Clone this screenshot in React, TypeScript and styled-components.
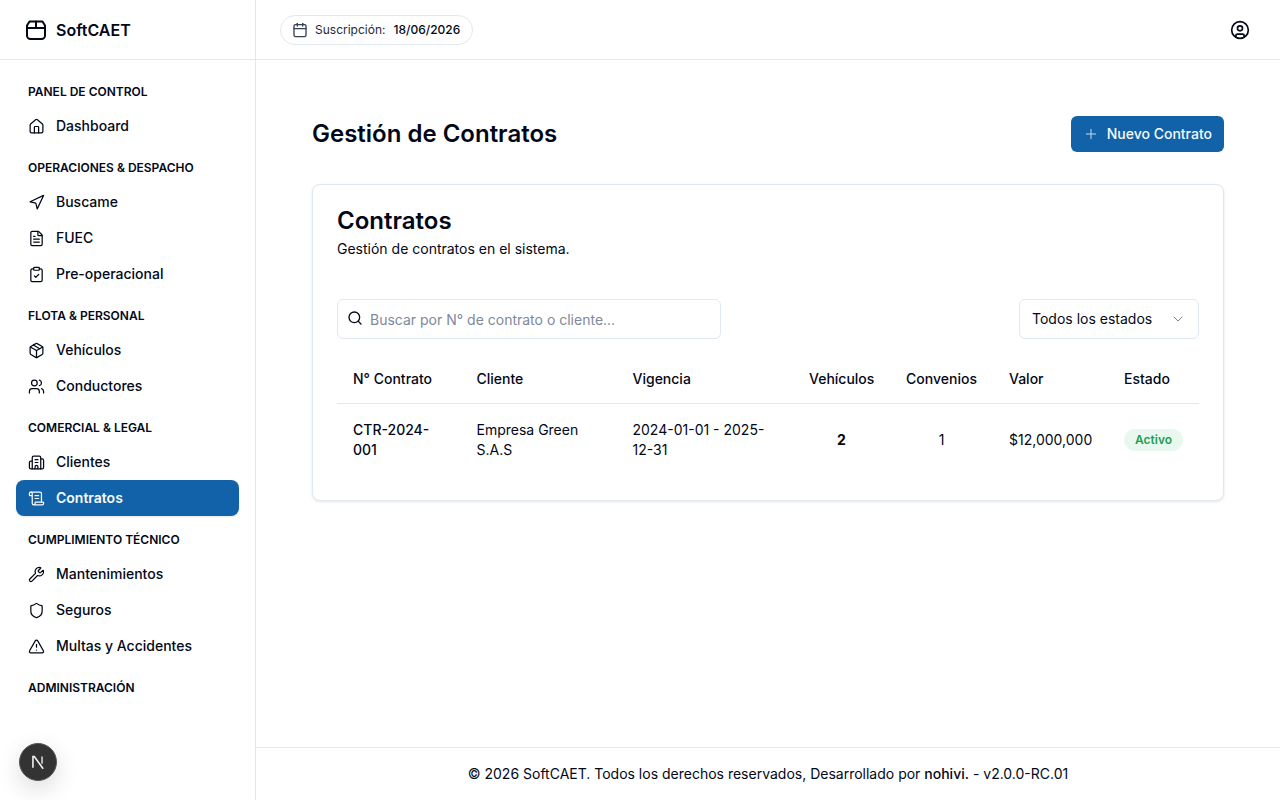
import React from "react";
import styled, { createGlobalStyle } from "styled-components";
import {
  House, Navigation, FileText, ClipboardCheck, Package, Users, Building2, ScrollText,
  Wrench, Shield, TriangleAlert, Calendar, CircleUser, Search, ChevronDown, Plus,
} from "lucide-react";

const Global = createGlobalStyle`
  * { box-sizing: border-box; }
  html, body { margin: 0; height: 100%; background: #fff; }
  body { font-family: Inter, "Liberation Sans", sans-serif; color: #020817; font-size: 14px; line-height: 20px; }
`;

const Shell = styled.div`
  display: flex;
  width: 100%;
  height: 100vh;
  overflow: hidden;
`;

const Sidebar = styled.aside`
  position: relative;
  flex: 0 0 256px;
  display: flex;
  flex-direction: column;
  border-right: 1px solid #e2e8f0;
`;

const Brand = styled.div`
  height: 60px;
  flex: none;
  display: flex;
  align-items: center;
  gap: 8px;
  padding: 0 24px;
  border-bottom: 1px solid #e2e8f0;
  font-size: 16px;
  line-height: 24px;
  font-weight: 600;
`;

const Nav = styled.nav`
  display: flex;
  flex-direction: column;
  padding: 19px 16px 0;
`;

const Group = styled.div`
  display: flex;
  flex-direction: column;
  margin-bottom: 11px;
`;

const GroupTitle = styled.div`
  height: 24px;
  margin-bottom: 5px;
  padding: 0 12px;
  display: flex;
  align-items: center;
  font-size: 12px;
  line-height: normal;
  font-weight: 600;
`;

const Item = styled.a<{ $active?: boolean }>`
  height: 36px;
  display: flex;
  align-items: center;
  gap: 11.5px;
  padding: 0 11.5px;
  border-radius: 8px;
  font-size: 14px;
  font-weight: ${(p) => (p.$active ? 600 : 500)};
  color: ${(p) => (p.$active ? "#f8fafc" : "#020817")};
  background: ${(p) => (p.$active ? "#1162a8" : "transparent")};
  box-shadow: ${(p) => (p.$active ? "0 1px 2px rgba(0,0,0,.1)" : "none")};
  svg { width: 17px; height: 17px; flex: none; stroke-width: 1.75; }
`;

const DevBadge = styled.div`
  position: absolute;
  left: 19px;
  bottom: 19px;
  width: 38px;
  height: 38px;
  border-radius: 50%;
  background: #333;
  border: 1px solid #555;
  box-shadow: 0 8px 24px rgba(0,0,0,.14);
  display: flex;
  align-items: center;
  justify-content: center;
`;

const Column = styled.div`
  flex: 1;
  min-width: 0;
  display: flex;
  flex-direction: column;
`;

const Topbar = styled.header`
  height: 60px;
  flex: none;
  display: flex;
  align-items: center;
  justify-content: space-between;
  padding: 0 30px 0 24px;
  border-bottom: 1px solid #e2e8f0;
`;

const SubPill = styled.div`
  height: 30px;
  display: flex;
  align-items: center;
  gap: 7px;
  padding: 0 12px 0 11px;
  border: 1px solid #e2e8f0;
  border-radius: 999px;
  font-size: 12px;
  line-height: 16px;
  color: #1e293b;
  svg { width: 16px; height: 16px; color: #334155; }
`;

const SubDate = styled.span`
  margin-left: 1px;
  font-weight: 500;
  color: #020817;
`;

const Main = styled.main`
  flex: 1;
  padding: 56px 56px 0;
`;

const PageHead = styled.div`
  height: 36px;
  display: flex;
  align-items: center;
  justify-content: space-between;
  margin-bottom: 32px;
`;

const PageTitle = styled.h1`
  margin: 0;
  font-size: 24px;
  line-height: 32px;
  font-weight: 600;
`;

const PrimaryButton = styled.button`
  height: 36px;
  display: flex;
  align-items: center;
  gap: 8px;
  padding: 0 12px;
  border: 0;
  border-radius: 6px;
  background: #1162a8;
  color: #f8fafc;
  font: 500 14px/20px Inter, sans-serif;
  svg { width: 16px; height: 16px; stroke-width: 1.5; opacity: .8; }
`;

const Card = styled.section`
  border: 1px solid #e2e8f0;
  border-radius: 8px;
  background: #fff;
  padding: 24px;
  box-shadow: 0 1px 3px rgba(0,0,0,.1);
`;

const CardTitle = styled.h2`
  margin: 0;
  font-size: 24px;
  line-height: 24px;
  font-weight: 600;
`;

const CardSub = styled.p`
  margin: 6px 0 0;
  font-size: 14px;
  line-height: 20px;
`;

const Filters = styled.div`
  display: flex;
  justify-content: space-between;
  margin-top: 40px;
`;

const SearchBox = styled.div`
  width: 384px;
  height: 40px;
  display: flex;
  align-items: center;
  gap: 7px;
  padding: 0 9px;
  border: 1px solid #e2e8f0;
  border-radius: 6px;
  svg { width: 16px; height: 16px; margin-top: -3px; }
`;

const Placeholder = styled.span`
  padding-top: 2px;
  font-size: 14px;
  color: #80889a;
`;

const SelectBox = styled.div`
  width: 180px;
  height: 40px;
  display: flex;
  align-items: center;
  justify-content: space-between;
  padding: 0 12px 0 12px;
  border: 1px solid #e2e8f0;
  border-radius: 6px;
  font-size: 14px;
  svg { width: 16px; height: 16px; opacity: .5; stroke-width: 1.5; }
`;

const Table = styled.table`
  width: 100%;
  margin-top: 16px;
  border-collapse: collapse;
  table-layout: fixed;
  font-size: 14px;
`;

const HeadCell = styled.th<{ $w: number; $center?: boolean }>`
  width: ${(p) => p.$w}px;
  height: 48px;
  padding: 0 16px;
  font-weight: 500;
  text-align: ${(p) => (p.$center ? "center" : "left")};
  border-bottom: 1px solid #e2e8f0;
`;

const Cell = styled.td<{ $center?: boolean; $bold?: boolean }>`
  height: 72px;
  padding: 16px;
  line-height: 20px;
  text-align: ${(p) => (p.$center ? "center" : "left")};
  font-weight: ${(p) => (p.$bold ? 700 : 400)};
`;

const CodeCell = styled(Cell)`
  font-weight: 500;
`;

const Badge = styled.span`
  display: inline-flex;
  align-items: center;
  height: 22px;
  padding: 0 11px;
  border-radius: 999px;
  background: #e9f8ef;
  color: #1f9d55;
  font-size: 12px;
  font-weight: 600;
`;

const Footer = styled.footer`
  height: 53px;
  flex: none;
  border-top: 1px solid #e2e8f0;
  font-size: 14px;
  line-height: 52px;
  text-align: center;
`;

const Strong = styled.strong`
  font-weight: 500;
`;

const LogoIcon = () => (
  <svg width="24" height="24" viewBox="0 0 24 24" fill="none" stroke="#020817" strokeWidth="2" strokeLinecap="round" strokeLinejoin="round">
    <path d="M3 10.5V7.5L5.5 3.5h13L21 7.5v10a3.5 3.5 0 0 1-3.5 3.5h-11A3.5 3.5 0 0 1 3 17.5Z" />
    <path d="M3 10h18M12 3.5V10" />
  </svg>
);

const NextMark = () => (
  <svg width="18" height="18" viewBox="0 0 16 16" fill="none">
    <path d="M3.5 13V3.2h1.2L12.6 14" stroke="#f4f4f4" strokeWidth="1.4" />
    <path d="M11.6 3v6.5" stroke="#d6d6d6" strokeWidth="1.4" />
  </svg>
);

const groups = [
  { title: "PANEL DE CONTROL", items: [{ label: "Dashboard", icon: House }] },
  {
    title: "OPERACIONES & DESPACHO",
    items: [
      { label: "Buscame", icon: Navigation },
      { label: "FUEC", icon: FileText },
      { label: "Pre-operacional", icon: ClipboardCheck },
    ],
  },
  {
    title: "FLOTA & PERSONAL",
    items: [
      { label: "Vehículos", icon: Package },
      { label: "Conductores", icon: Users },
    ],
  },
  {
    title: "COMERCIAL & LEGAL",
    items: [
      { label: "Clientes", icon: Building2 },
      { label: "Contratos", icon: ScrollText, active: true },
    ],
  },
  {
    title: "CUMPLIMIENTO TÉCNICO",
    items: [
      { label: "Mantenimientos", icon: Wrench },
      { label: "Seguros", icon: Shield },
      { label: "Multas y Accidentes", icon: TriangleAlert },
    ],
  },
  { title: "ADMINISTRACIÓN", items: [] },
];

export default function App() {
  return (
    <Shell>
      <Global />
      <Sidebar>
        <Brand>
          <LogoIcon />
          SoftCAET
        </Brand>
        <Nav>
          {groups.map((g) => (
            <Group key={g.title}>
              <GroupTitle>{g.title}</GroupTitle>
              {g.items.map((it: any) => (
                <Item key={it.label} $active={it.active}>
                  <it.icon />
                  {it.label}
                </Item>
              ))}
            </Group>
          ))}
        </Nav>
        <DevBadge>
          <NextMark />
        </DevBadge>
      </Sidebar>
      <Column>
        <Topbar>
          <SubPill>
            <Calendar />
            <span>Suscripción:</span>
            <SubDate>18/06/2026</SubDate>
          </SubPill>
          <CircleUser size={20} strokeWidth={2} />
        </Topbar>
        <Main>
          <PageHead>
            <PageTitle>Gestión de Contratos</PageTitle>
            <PrimaryButton>
              <Plus />
              Nuevo Contrato
            </PrimaryButton>
          </PageHead>
          <Card>
            <CardTitle>Contratos</CardTitle>
            <CardSub>Gestión de contratos en el sistema.</CardSub>
            <Filters>
              <SearchBox>
                <Search />
                <Placeholder>Buscar por N° de contrato o cliente...</Placeholder>
              </SearchBox>
              <SelectBox>
                Todos los estados
                <ChevronDown />
              </SelectBox>
            </Filters>
            <Table>
              <thead>
                <tr>
                  <HeadCell $w={123.5}>N° Contrato</HeadCell>
                  <HeadCell $w={156}>Cliente</HeadCell>
                  <HeadCell $w={176.5}>Vigencia</HeadCell>
                  <HeadCell $w={97} $center>Vehículos</HeadCell>
                  <HeadCell $w={103} $center>Convenios</HeadCell>
                  <HeadCell $w={115}>Valor</HeadCell>
                  <HeadCell $w={91}>Estado</HeadCell>
                </tr>
              </thead>
              <tbody>
                <tr>
                  <CodeCell>CTR-2024-001</CodeCell>
                  <Cell>Empresa Green S.A.S</Cell>
                  <Cell>2024-01-01 - 2025-12-31</Cell>
                  <Cell $center $bold>2</Cell>
                  <Cell $center>1</Cell>
                  <Cell>$12,000,000</Cell>
                  <Cell><Badge>Activo</Badge></Cell>
                </tr>
              </tbody>
            </Table>
          </Card>
        </Main>
        <Footer>
          © 2026 SoftCAET. Todos los derechos reservados, Desarrollado por <Strong>nohivi.</Strong> - v2.0.0-RC.01
        </Footer>
      </Column>
    </Shell>
  );
}
